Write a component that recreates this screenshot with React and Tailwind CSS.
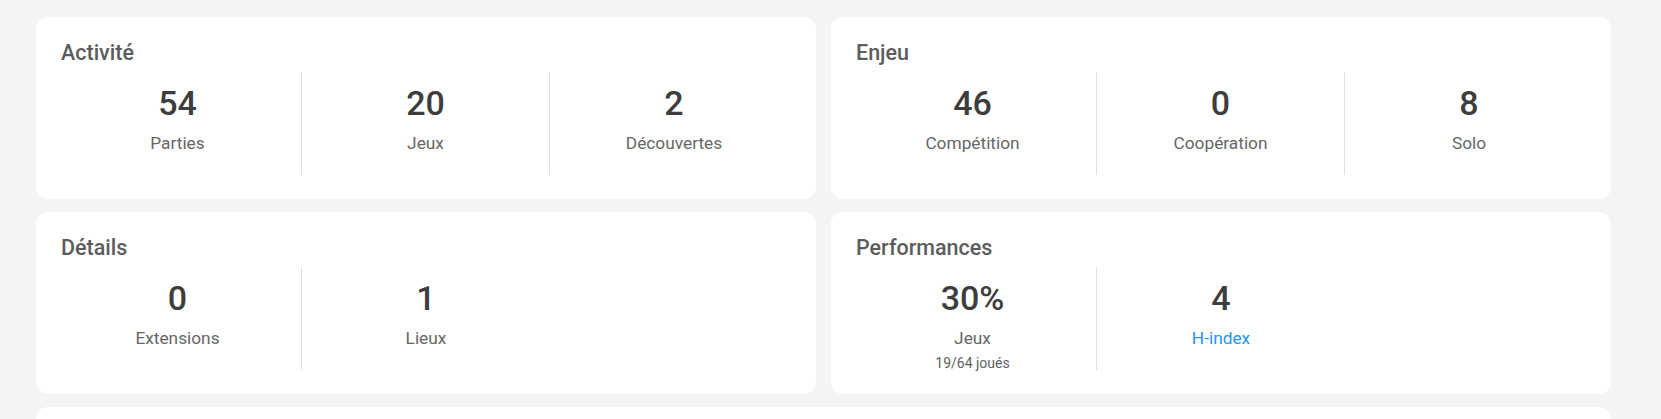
const CARDS = [
  {
    title: 'Activité',
    stats: [
      { value: '54', label: 'Parties' },
      { value: '20', label: 'Jeux' },
      { value: '2', label: 'Découvertes' },
    ],
  },
  {
    title: 'Enjeu',
    stats: [
      { value: '46', label: 'Compétition' },
      { value: '0', label: 'Coopération' },
      { value: '8', label: 'Solo' },
    ],
  },
  {
    title: 'Détails',
    stats: [
      { value: '0', label: 'Extensions' },
      { value: '1', label: 'Lieux' },
    ],
  },
  {
    title: 'Performances',
    stats: [
      { value: '30%', label: 'Jeux', sub: '19/64 joués' },
      { value: '4', label: 'H-index', link: true },
    ],
  },
];

function Stat({ value, label, sub, link, last }) {
  return (
    <div className={`flex flex-col items-center h-[103px] pt-[11px] ${last ? '' : 'border-r border-[#e0e0e0]'}`}>
      <div className="text-[34px] leading-[40px] font-medium text-[#3d3d3d]">{value}</div>
      <div className={`mt-[8px] text-[17.3px] leading-[24px] ${link ? 'text-[#2196f3]' : 'text-[#666666]'}`}>{label}</div>
      {sub && <div className="mt-[3px] text-[14px] leading-[20px] text-[#616161]">{sub}</div>}
    </div>
  );
}

function StatCard({ title, stats }) {
  return (
    <div className="bg-white rounded-xl h-[182px] px-[18px] pt-[24px]">
      <h2 className="pl-[7px] text-[21.5px] leading-[24px] font-medium text-[#5c5c5c]">{title}</h2>
      <div className="mt-[7px] grid grid-cols-3">
        {stats.map((s, i) => (
          <Stat key={s.label} {...s} last={i === stats.length - 1} />
        ))}
      </div>
    </div>
  );
}

export default function App() {
  return (
    <div className="min-h-screen bg-[#f4f4f4] pl-[36px] pt-[17px] font-['Roboto',sans-serif]">
      <div className="grid grid-cols-[780px_780px] gap-x-[15px] gap-y-[13px] w-[1575px]">
        {CARDS.map(c => (
          <StatCard key={c.title} {...c} />
        ))}
        <div className="col-span-2 bg-white rounded-xl h-[200px]" />
      </div>
    </div>
  );
}
